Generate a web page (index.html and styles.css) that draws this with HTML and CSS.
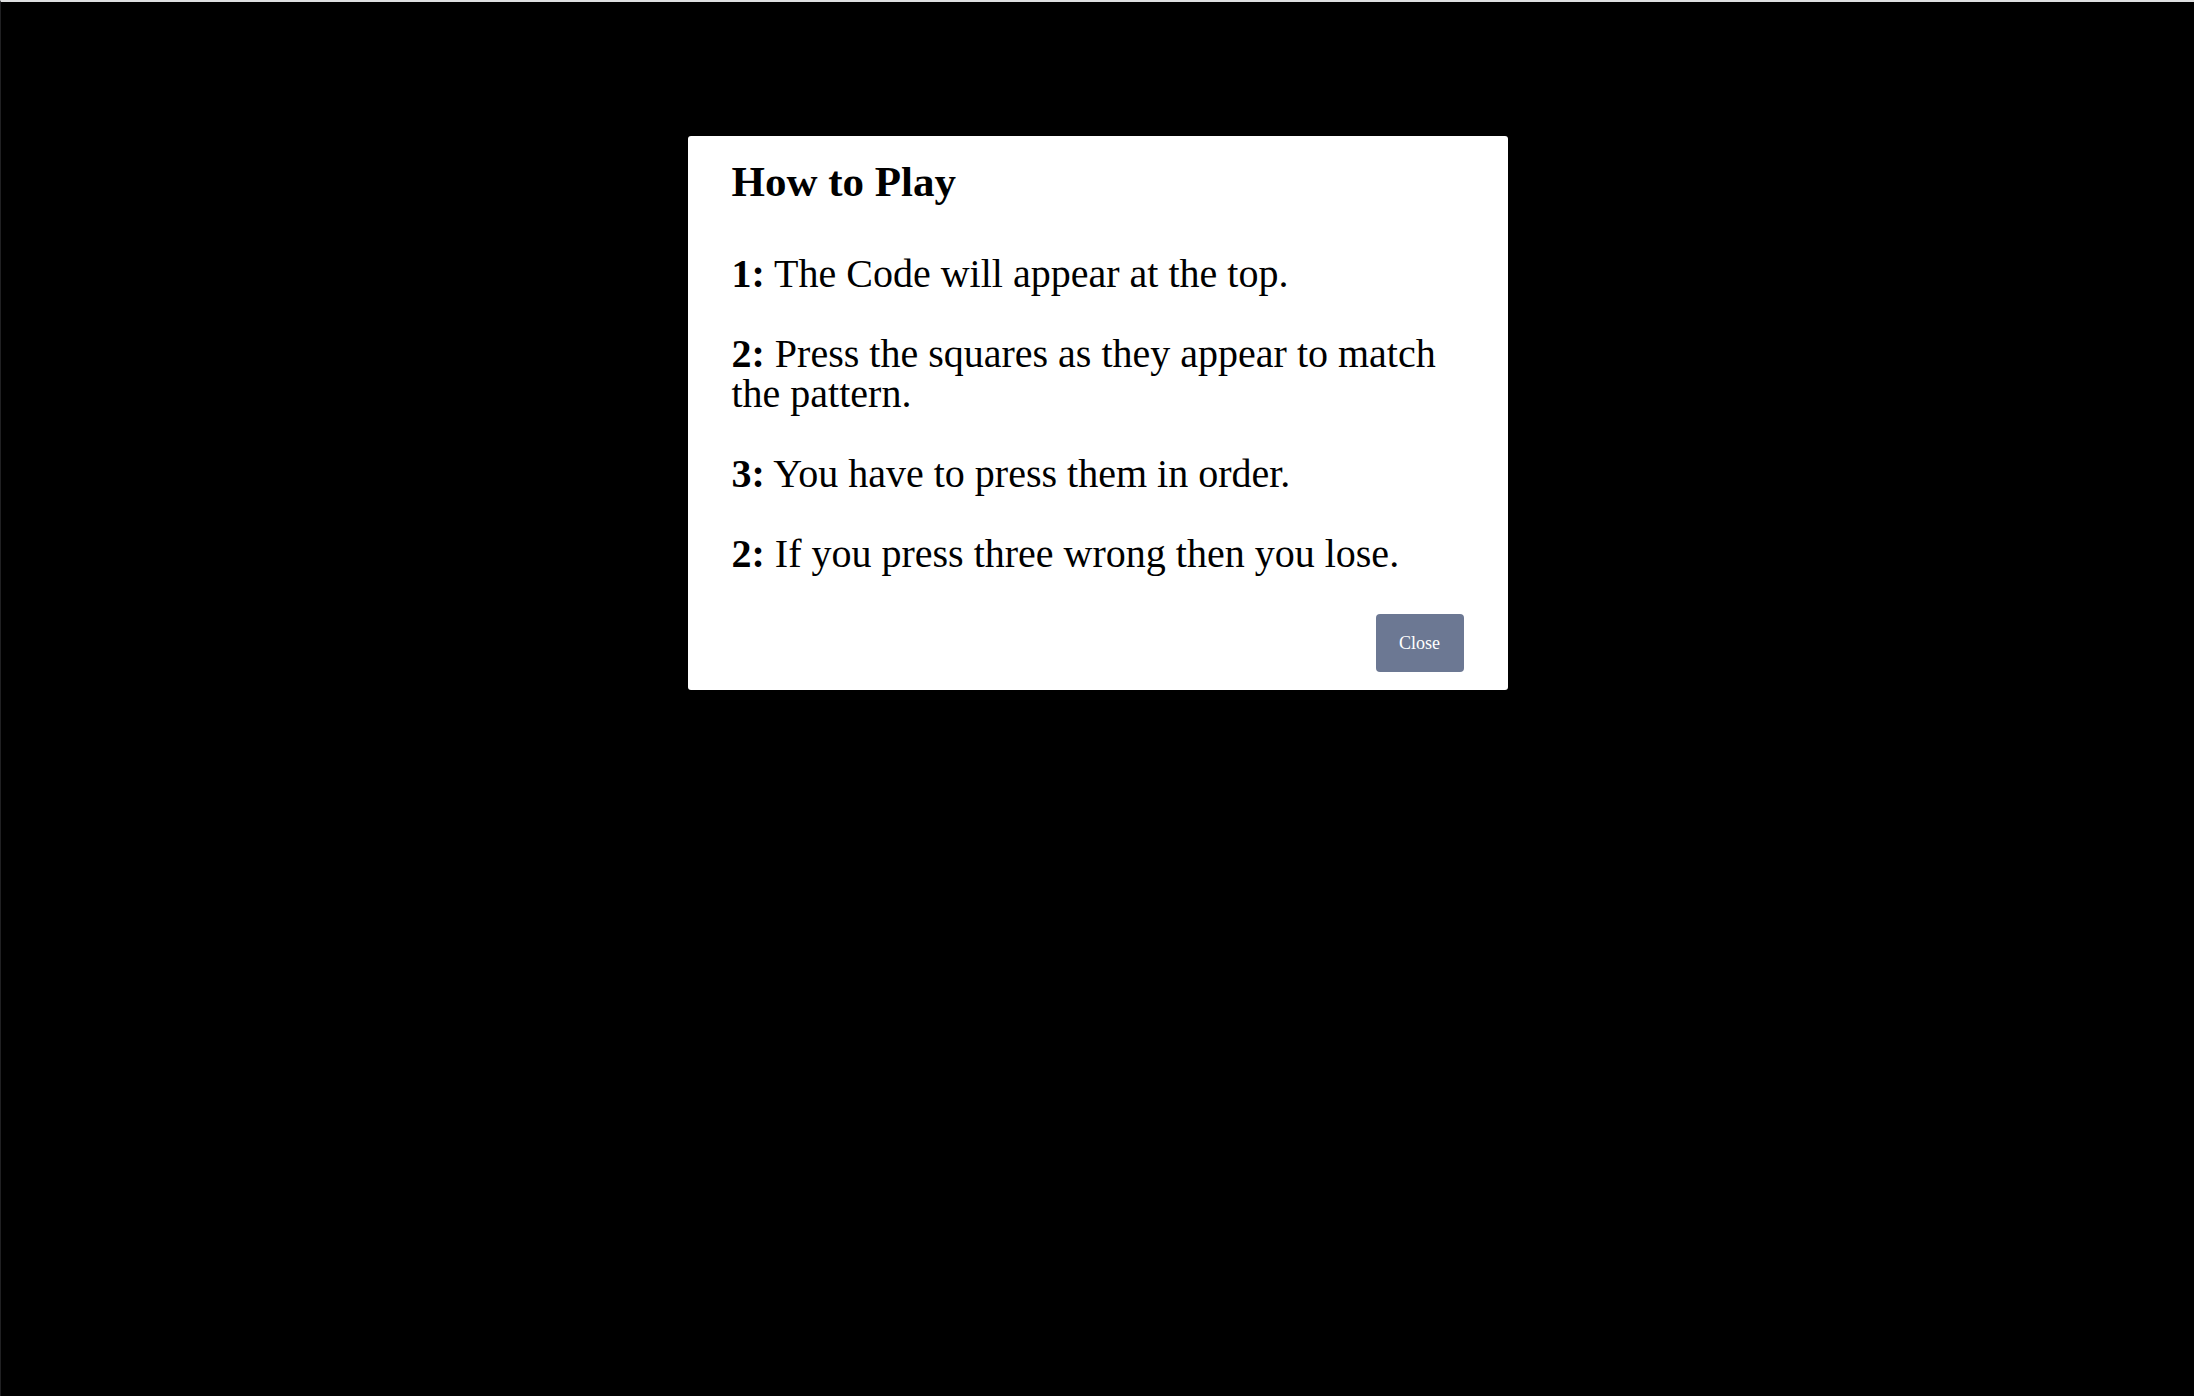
FILE: index.html
```html
<!DOCTYPE html>
<html lang="en">
<head>
<meta charset="utf-8">
<meta name="viewport" content="width=device-width, initial-scale=1">
<title>How to Play</title>
<link rel="stylesheet" href="styles.css">
</head>
<body>
<main class="overlay">
  <section class="modal" role="dialog" aria-labelledby="modal-title">
    <h1 class="modal-title" id="modal-title">How to Play</h1>
    <div class="modal-content">
      <p><strong>1:</strong> The Code will appear at the top.</p>
      <p><strong>2:</strong> Press the squares as they appear to match the pattern.</p>
      <p><strong>3:</strong> You have to press them in order.</p>
      <p><strong>2:</strong> If you press three wrong then you lose.</p>
    </div>
    <div class="modal-actions">
      <button class="close-button" type="button">Close</button>
    </div>
  </section>
</main>
</body>
</html>
```
FILE: styles.css
```css
* {
  box-sizing: border-box;
}

body {
  margin: 0;
  background: #000;
  color: #000;
  font-family: "Liberation Serif", "Times New Roman", serif;
}

.overlay {
  display: flex;
  justify-content: center;
  align-items: flex-start;
  min-height: 100vh;
  padding: 134px 16px 32px;
  border-top: 2px solid #dedfe0;
  border-left: 1px solid #202022;
}

.modal {
  width: 100%;
  max-width: 820px;
  padding: 18px 44px;
  border-radius: 3px;
  background: #fff;
}

.modal-title {
  margin: 0 0 44px;
  font-size: 43px;
  line-height: 56px;
}

.modal-content {
  display: flex;
  flex-direction: column;
  gap: 40px;
  margin-bottom: 40px;
  font-size: 40px;
  line-height: 40px;
}

.modal-content p {
  margin: 0;
}

.modal-actions {
  display: flex;
  justify-content: flex-end;
}

.close-button {
  min-width: 88px;
  padding: 19px 23px;
  border: 0;
  border-radius: 4px;
  background: #6c7893;
  color: #fff;
  font-family: inherit;
  font-size: 18px;
  line-height: 20px;
  cursor: pointer;
}
```
